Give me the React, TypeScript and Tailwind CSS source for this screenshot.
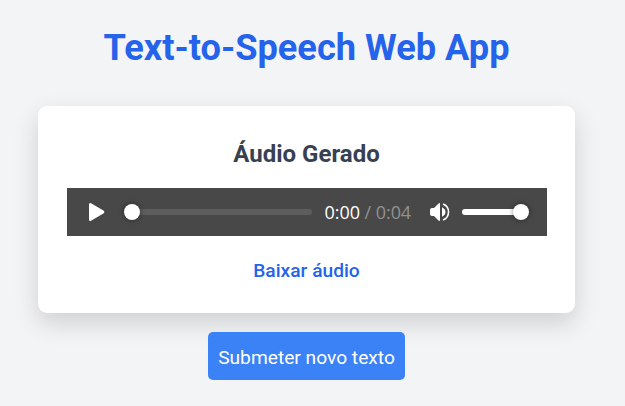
import React from "react";

function AudioPlayer() {
  return (
    <div className="mt-[18px] flex h-12 w-[480px] items-center bg-[#484848] pl-[22px]">
      <svg width="16" height="18" viewBox="0 0 16 18" className="shrink-0 fill-white">
        <path d="M0 1.6Q0-.5 2 .3L14.4 7.5Q16.4 9 14.4 10.5L2 17.7Q0 18.5 0 16.4Z" />
      </svg>
      <div className="ml-[19px] flex w-[188px] items-center">
        <span className="z-10 h-4 w-4 shrink-0 rounded-full bg-white shadow-[0_0_5px_rgba(0,0,0,0.5)]" />
        <span className="-ml-1 h-[6px] flex-1 rounded-full bg-[#5d5d5d]" />
      </div>
      <div className="ml-[13px] w-[87px] whitespace-nowrap font-['Open_Sans',sans-serif] text-[18px] leading-6 tracking-[-0.05px] text-[#919191]">
        <span className="text-white">0:00</span> / 0:04
      </div>
      <svg width="20" height="18" viewBox="0 0 20 18" className="ml-[18px] shrink-0">
        <path d="M0 7Q0 5 2 5H4L8.5 .5Q10-.5 10 1V17Q10 18.5 8.5 17.5L4 13H2Q0 13 0 11Z" fill="white" />
        <path d="M12 4.2Q15.5 6 15.5 9T12 13.8Z" fill="white" />
        <path d="M13 1Q18.5 3 18.5 9T13 17" stroke="white" strokeWidth="1.6" fill="none" />
      </svg>
      <div className="ml-3 flex w-[67px] items-center">
        <span className="-mr-1 h-[6px] flex-1 rounded-full bg-white" />
        <span className="h-4 w-4 shrink-0 rounded-full bg-white shadow-[0_0_5px_rgba(0,0,0,0.5)]" />
      </div>
    </div>
  );
}

export default function App() {
  return (
    <main className="h-[406px] overflow-hidden bg-[#f3f4f6] font-[Roboto,sans-serif]">
      <div className="ml-[38px] flex w-[537px] flex-col items-center">
        <h1 className="mt-[28px] whitespace-nowrap text-[36.2px] leading-10 font-bold text-[#2563eb]">Text-to-Speech Web App</h1>
        <section className="mt-[38px] flex h-[207px] w-full flex-col items-center rounded-[9px] bg-white pt-8 shadow-[0_10px_25px_rgba(0,0,0,0.15)]">
          <h2 className="text-2xl font-bold text-[#374151]">Áudio Gerado</h2>
          <AudioPlayer />
          <a className="mt-[21px] text-[19.2px] leading-7 font-medium text-[#2563eb]">Baixar áudio</a>
        </section>
        <button className="z-10 mt-[19px] h-12 w-[197px] rounded-[5px] bg-[#3b82f6] pt-[3px] text-[19.2px] leading-7 text-white">Submeter novo texto</button>
      </div>
    </main>
  );
}
